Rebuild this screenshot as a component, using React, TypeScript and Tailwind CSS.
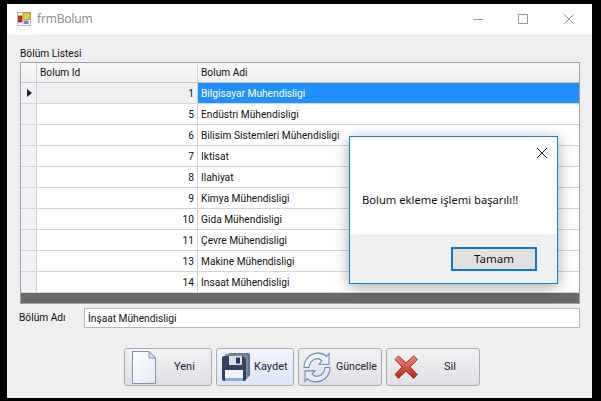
import React from 'react';

const rows: [number, string][] = [
  [1, 'Bilgisayar Muhendisligi'],
  [5, 'Endüstri Mühendisligi'],
  [6, 'Bilisim Sistemleri Mühendisligi'],
  [7, 'Iktisat'],
  [8, 'Ilahiyat'],
  [9, 'Kimya Mühendisligi'],
  [10, 'Gida Mühendisligi'],
  [11, 'Çevre Mühendisligi'],
  [13, 'Makine Mühendisligi'],
  [14, 'Insaat Mühendisligi'],
];

const FormIcon = () => (
  <svg width="14" height="14" viewBox="0 0 14 14" className="shrink-0">
    <rect x="0.5" y="0.5" width="13" height="13" fill="#fff" stroke="#b5b5b5" />
    <rect x="6" y="1" width="7" height="6.5" fill="#f3c93a" stroke="#b58a1a" strokeWidth="0.7" />
    <rect x="1.500" y="4" width="3.500" height="6" fill="#cf2d22" stroke="#8e1a14" strokeWidth="0.7" />
    <rect x="6.500" y="8.500" width="5" height="3.500" fill="#5b93e0" />
  </svg>
);

const NewIcon = () => (
  <svg width="24" height="33" viewBox="0 0 24 33">
    <defs>
      <linearGradient id="pg" x1="0" y1="0" x2="1" y2="1">
        <stop offset="0" stopColor="#ffffff" />
        <stop offset="1" stopColor="#e3e9f4" />
      </linearGradient>
    </defs>
    <path d="M0.500 0.500H17L23.500 7V32.500H0.500Z" fill="url(#pg)" stroke="#7d92b8" />
    <path d="M17 0.500V7H23.500Z" fill="#d5dded" stroke="#7d92b8" />
  </svg>
);

const SaveIcon = () => (
  <svg width="28" height="28" viewBox="0 0 28 28">
    <rect x="6" y="0" width="22" height="24" rx="2" fill="#66758f" />
    <rect x="3" y="1" width="23" height="25" rx="2" fill="#77859d" />
    <path d="M2 3H21L24 6V26a2 2 0 0 1-2 2H2a2 2 0 0 1-2-2V5a2 2 0 0 1 2-2Z" fill="#33415c" />
    <rect x="7" y="3" width="13" height="9" fill="#d8dde6" />
    <rect x="14" y="4.500" width="4" height="6" fill="#2d3850" />
    <rect x="3" y="17" width="18" height="11" fill="#f2f5fa" />
    <rect x="3" y="25" width="18" height="3" fill="#7fb0e0" />
  </svg>
);

const RefreshIcon = () => (
  <svg width="28" height="31" viewBox="0 0 28 28" preserveAspectRatio="none">
    <path d="M1 14C1 6 8 1 15 1c3.500 0 6.500 1 8.500 3L26 1.500V11H16l3-3c-1.300-1.300-3-2-4.800-2C10 6 6.500 9.500 6 14Z" fill="#f2f5fb" stroke="#6683b5" />
    <path d="M27 14c0 8-7 13-14 13-3.500 0-6.500-1-8.500-3L2 26.500V17h10l-3 3c1.300 1.300 3 2 4.800 2 4.200 0 7.700-3.500 8.200-8Z" fill="#e6ecf7" stroke="#6683b5" />
  </svg>
);

const DeleteIcon = () => (
  <svg width="26" height="26" viewBox="0 0 26 26">
    <defs>
      <linearGradient id="xg" x1="0" y1="0" x2="0" y2="1">
        <stop offset="0" stopColor="#ee8378" />
        <stop offset="1" stopColor="#b8261c" />
      </linearGradient>
    </defs>
    <path
      d="M2 5.500 5.500 2 13 9 20.500 2 24.500 5.500 17 13 24.500 20.500 20.500 24.500 13 17 5.500 24.500 2 20.500 9 13Z"
      fill="url(#xg)"
      stroke="#a8352c"
      strokeLinejoin="round"
    />
  </svg>
);

const ToolButton = ({
  icon,
  label,
  width,
  active,
  labelClass,
}: {
  icon: React.ReactNode;
  label: string;
  width: string;
  active?: boolean;
  labelClass: string;
}) => (
  <button
    className={`${width} h-[38px] flex items-center rounded-[3px] border border-[#a9abb1] ${
      active ? 'bg-gradient-to-b from-[#f3f6fe] to-[#dfe6fa]' : 'bg-gradient-to-b from-[#f2f2f4] to-[#dfe0e4]'
    }`}
  >
    {icon}
    <span className={`text-[#1b2333] ${labelClass}`}>{label}</span>
  </button>
);

export default function App() {
  return (
    <div className="w-[601px] h-[401px] bg-black pt-[4px] pl-[7px] text-[10.2px] text-[#111] font-['Roboto',sans-serif] overflow-hidden">
      <div className="relative w-[585px] h-[394px] bg-[#efefef] flex flex-col">
        <div className="h-[30px] bg-white flex items-center pl-[10px] pr-[18px] shrink-0">
          <FormIcon />
          <span className="ml-[6px] text-[12px] font-['Noto_Sans',sans-serif] text-[#8f8f8f] tracking-[-0.2px]">frmBolum</span>
          <div className="ml-auto flex items-center gap-[35px]">
            <div className="w-[10px] h-px bg-[#999]" />
            <div className="w-[10px] h-[10px] border border-[#999]" />
            <svg width="10" height="10" viewBox="0 0 10 10" className="ml-[1px]">
              <path d="M0 0 10 10M10 0 0 10" stroke="#999" strokeWidth="1" />
            </svg>
          </div>
        </div>

        <div className="pl-[13px] pt-[12px] leading-[16px]">Bölüm Listesi</div>

        <div className="ml-[13px] mt-0 w-[560px] border border-[#a0a0aa] bg-white flex flex-col">
          <div className="flex h-[20px] bg-gradient-to-b from-[#f8f8f9] to-[#f0f0f2] border-b border-[#c4c4cc]">
            <div className="w-[16px] border-r border-[#d0d0d8]" />
            <div className="w-[161px] border-r border-[#d0d0d8] pl-[3px] leading-[20px]">Bolum Id</div>
            <div className="flex-1 pl-[3px] leading-[20px]">Bolum Adi</div>
          </div>
          {rows.map(([id, name], i) => (
            <div key={id} className="flex h-[21px] border-b border-[#d4d4dc]">
              <div className="w-[16px] bg-[#f1f2f5] border-r border-[#d0d0d8] flex items-center justify-center">
                {i === 0 && (
                  <svg width="5" height="8" viewBox="0 0 5 8" className="ml-[1px]">
                    <path d="M0 0 5 4 0 8Z" fill="#222" />
                  </svg>
                )}
              </div>
              <div
                className={`w-[161px] border-r border-[#d0d0d8] pr-[3px] text-right leading-[21px] ${
                  i === 0 ? 'bg-[#f0f0f2]' : ''
                }`}
              >
                {id}
              </div>
              <div className={`flex-1 pl-[3px] leading-[21px] ${i === 0 ? 'bg-[#1e90ff] text-white' : ''}`}>{name}</div>
            </div>
          ))}
          <div className="h-[10px] bg-[#696969]" />
        </div>

        <div className="flex items-center mt-[4px] ml-[12px]">
          <span className="w-[65px]">Bölüm Adı</span>
          <div className="w-[496px] h-[20px] bg-white border border-[#b8b8bc] pl-[3px] leading-[19px]">İnşaat Mühendisligi</div>
        </div>

        <div className="flex gap-[4px] ml-[117px] mt-[20px] text-[11px]">
          <ToolButton icon={<span className="ml-[7px] flex"><NewIcon /></span>} label="Yeni" width="w-[88px]" labelClass="ml-[18px]" />
          <ToolButton icon={<span className="ml-[5px] flex"><SaveIcon /></span>} label="Kaydet" width="w-[78px]" active labelClass="ml-[4px]" />
          <ToolButton icon={<span className="ml-[4px] flex"><RefreshIcon /></span>} label="Güncelle" width="w-[84px]" labelClass="ml-[5px] text-[10.6px]" />
          <ToolButton icon={<span className="ml-[6px] flex"><DeleteIcon /></span>} label="Sil" width="w-[94px]" labelClass="ml-[25px]" />
        </div>

        {/* message box */}
        <div className="absolute left-[342px] top-[132px] w-[209px] h-[148px] bg-white border border-[#1083d8] shadow-[0_3px_14px_rgba(0,0,0,0.35)] flex flex-col font-['Noto_Sans',sans-serif]">
          <div className="h-[30px] flex justify-end items-center pr-[10px] pt-[2px]">
            <svg width="10" height="10" viewBox="0 0 10 10">
              <path d="M0 0 10 10M10 0 0 10" stroke="#111" strokeWidth="1" />
            </svg>
          </div>
          <div className="h-[67px] pl-[12px] pt-[25px] leading-[16px] text-[11.2px]">Bolum ekleme işlemi başarılı!!</div>
          <div className="flex-1 bg-[#f0f0f0] flex justify-end items-start pr-[20px] pt-[13px]">
            <button className="w-[86px] h-[24px] bg-[#e1e1e1] border-2 border-[#0a78d7] text-[11.5px] leading-[18px]">Tamam</button>
          </div>
        </div>
      </div>
    </div>
  );
}
